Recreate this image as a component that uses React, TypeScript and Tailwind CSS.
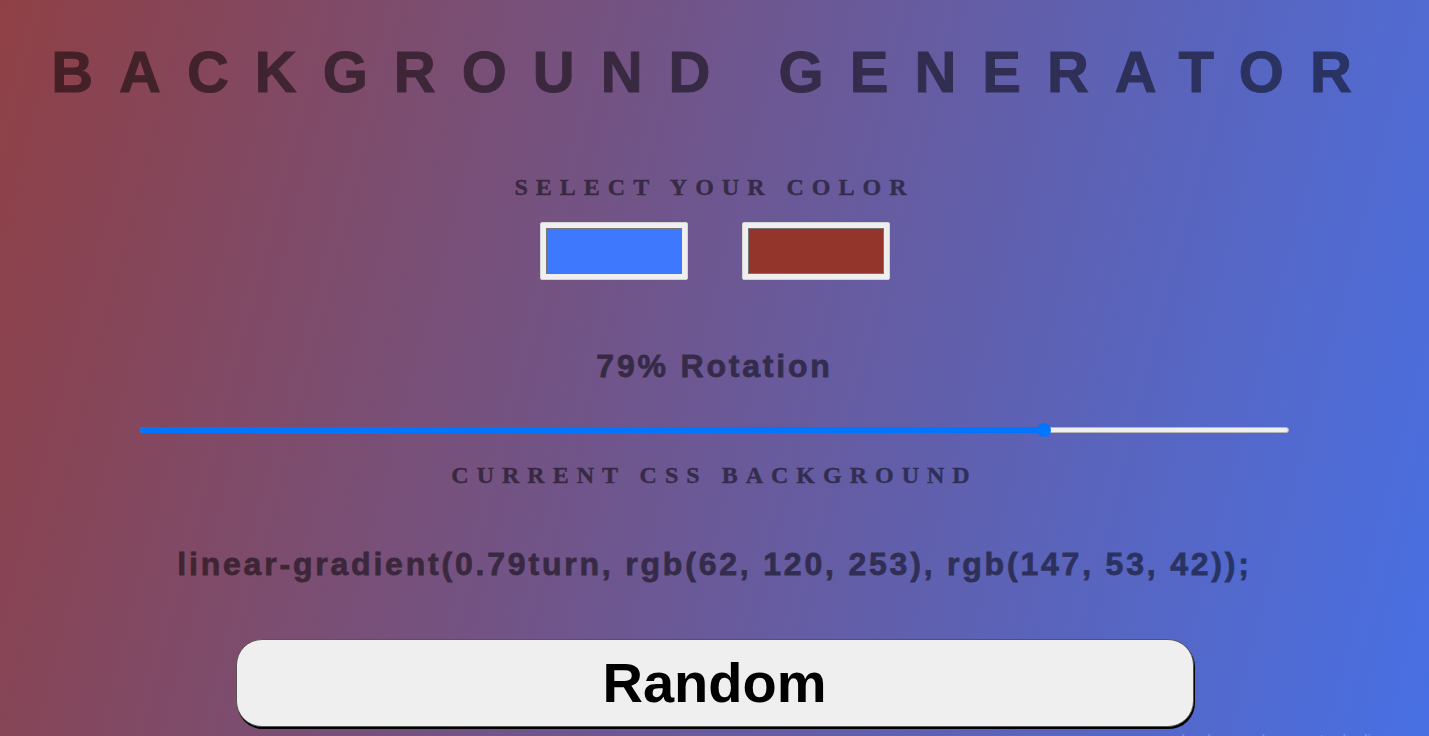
const sans = "font-['Liberation_Sans',Arial,sans-serif]";
const serif = "font-['Liberation_Serif','Times_New_Roman',serif]";

function Swatch({ color }: { color: string }) {
  return (
    <div className="w-[148px] h-[58px] bg-[#efefef] rounded-[2px] p-[5px] border border-[#d4d4d4]">
      <div className="w-full h-full border border-[#767676]" style={{ background: color }} />
    </div>
  );
}

export default function App() {
  const rotation = 79;
  return (
    <div className={`h-screen overflow-hidden bg-[linear-gradient(0.79turn,#4870e4,#8f4045)] text-black ${sans}`}>
      <div className="flex flex-col items-center">
        <h1 className="mt-[43px] text-[58px] leading-none font-bold tracking-[26px] whitespace-nowrap opacity-50 [-webkit-text-stroke:1px_black]">
          BACKGROUND GENERATOR
        </h1>

        <h3 className={`mt-[74px] text-[24px] leading-none font-bold tracking-[8px] opacity-50 [-webkit-text-stroke:0.4px_black] ${serif}`}>
          SELECT YOUR COLOR
        </h3>
        <div className="mt-[23px] flex gap-[54px]">
          <Swatch color="rgb(62, 120, 253)" />
          <Swatch color="rgb(147, 53, 42)" />
        </div>

        <h2 className="mt-[70px] text-[32px] leading-none font-bold tracking-[2.8px] opacity-50 [-webkit-text-stroke:0.8px_black]">
          {rotation}% Rotation
        </h2>

        {/* slider */}
        <div className="mt-[41px] relative w-[1149px] h-[14px]">
          <div className="absolute left-0 right-0 top-[4px] h-[6px] rounded-full bg-[#efefef] border border-[#b5b5b5]">
            <div
              className="absolute -left-px -top-px -bottom-px rounded-l-full bg-[#0075ff]"
              style={{ width: `calc(${rotation / 100} * (100% - 14px) + 8px)` }}
            />
          </div>
          <div
            className="absolute top-0 w-[14px] h-[14px] rounded-full bg-[#0075ff]"
            style={{ left: `calc(${rotation / 100} * (100% - 14px))` }}
          />
        </div>

        <h3 className={`mt-[26px] text-[24px] leading-none font-bold tracking-[8px] opacity-50 [-webkit-text-stroke:0.4px_black] ${serif}`}>
          CURRENT CSS BACKGROUND
        </h3>

        <p className="mt-[61px] text-[32px] leading-none font-bold tracking-[2.8px] whitespace-nowrap opacity-50 [-webkit-text-stroke:0.8px_black]">
          linear-gradient(0.79turn, rgb(62, 120, 253), rgb(147, 53, 42));
        </p>

        <button className="mt-[59px] w-[958px] h-[88px] rounded-[26px] bg-[#efefef] border border-[#555] shadow-[1px_2px_0_#000] text-black text-[56px] font-bold tracking-normal leading-none">
          Random
        </button>

        <p className="self-end mt-[6px] mr-[58px] text-[16px] leading-none text-white/25 tracking-normal whitespace-nowrap">
          background generator by li
        </p>
      </div>
    </div>
  );
}
